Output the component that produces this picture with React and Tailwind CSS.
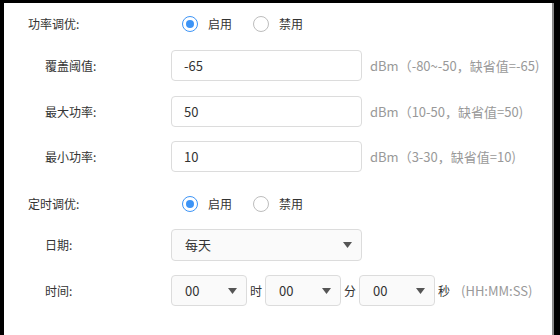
import { useState } from 'react';

const font = { fontFamily: '"Noto Sans CJK SC", "Noto Sans", sans-serif' };

function Radio({ checked, label, onClick }) {
  return (
    <button type="button" onClick={onClick} className="flex items-center mr-[21px]">
      {checked ? (
        <span className="w-[16px] h-[16px] rounded-full border-[1.5px] border-[#3d94f6] flex items-center justify-center">
          <span className="w-[8px] h-[8px] rounded-full bg-[#3d94f6]" />
        </span>
      ) : (
        <span className="w-[16px] h-[16px] rounded-full border border-[#bdbdbd]" />
      )}
      <span className="ml-[10px] text-[12px] text-[#333]">{label}</span>
    </button>
  );
}

function Arrow() {
  return (
    <svg width="9" height="6" viewBox="0 0 9 6" className="shrink-0">
      <path d="M0 0h9L4.5 6z" fill="#555" />
    </svg>
  );
}

function Select({ value, className }) {
  return (
    <div className={`h-full flex items-center justify-between pl-[13px] pr-[9px] border border-[#dcdcdc] rounded-[4px] bg-[#fafafa] ${className}`}>
      <span className="text-[13px] text-[#333]">{value}</span>
      <Arrow />
    </div>
  );
}

export default function App() {
  const [power, setPower] = useState(true);
  const [timer, setTimer] = useState(true);

  const fields = [
    { label: '覆盖阈值:', value: '-65', note: 'dBm（-80~-50，缺省值=-65)', mt: 'mt-[10px]' },
    { label: '最大功率:', value: '50', note: 'dBm（10-50，缺省值=50)', mt: 'mt-[15px]' },
    { label: '最小功率:', value: '10', note: 'dBm（3-30，缺省值=10)', mt: 'mt-[14px]' },
  ];

  return (
    <div className="w-[560px] h-[335px] bg-black pl-[4px] pt-[3px] pr-[2px] overflow-hidden" style={font}>
      <div className="h-full flex">
        <div className="w-[548px] h-full bg-white flex flex-col">
          <div className="mt-[5px] h-[32px] flex items-center">
            <div className="w-[167px] pl-[24px] text-[12px] text-[#333]">功率调优:</div>
            <div className="flex items-center pl-[11px]">
              <Radio checked={power} label="启用" onClick={() => setPower(true)} />
              <Radio checked={!power} label="禁用" onClick={() => setPower(false)} />
            </div>
          </div>

          {fields.map((f) => (
            <div key={f.label} className={`${f.mt} h-[31px] flex items-center`}>
              <div className="w-[167px] pl-[41px] text-[12px] text-[#333]">{f.label}</div>
              <div className="w-[191px] h-full flex items-center pl-[12px] border border-[#dcdcdc] rounded-[4px] bg-white text-[13px] text-[#333]">
                {f.value}
              </div>
              <div className="ml-[8px] text-[13px] text-[#999]">{f.note}</div>
            </div>
          ))}

          <div className="mt-[16px] h-[32px] flex items-center">
            <div className="w-[167px] pl-[24px] text-[12px] text-[#333]">定时调优:</div>
            <div className="flex items-center pl-[11px]">
              <Radio checked={timer} label="启用" onClick={() => setTimer(true)} />
              <Radio checked={!timer} label="禁用" onClick={() => setTimer(false)} />
            </div>
          </div>

          <div className="mt-[9px] h-[32px] flex items-center">
            <div className="w-[167px] pl-[41px] text-[12px] text-[#333]">日期:</div>
            <Select value="每天" className="w-[191px]" />
          </div>

          <div className="mt-[14px] h-[31px] flex items-center">
            <div className="w-[167px] pl-[41px] text-[12px] text-[#333]">时间:</div>
            <Select value="00" className="w-[76px]" />
            <span className="mx-[3px] text-[12px] text-[#333]">时</span>
            <Select value="00" className="w-[76px]" />
            <span className="mx-[3px] text-[12px] text-[#333]">分</span>
            <Select value="00" className="w-[76px]" />
            <span className="ml-[3px] text-[12px] text-[#333]">秒</span>
            <span className="ml-[11px] text-[13px] text-[#999]">(HH:MM:SS)</span>
          </div>
        </div>
        <div className="w-[2px] h-full bg-[#8a8a8a]" />
        <div className="w-[4px] h-full bg-black" />
      </div>
    </div>
  );
}
